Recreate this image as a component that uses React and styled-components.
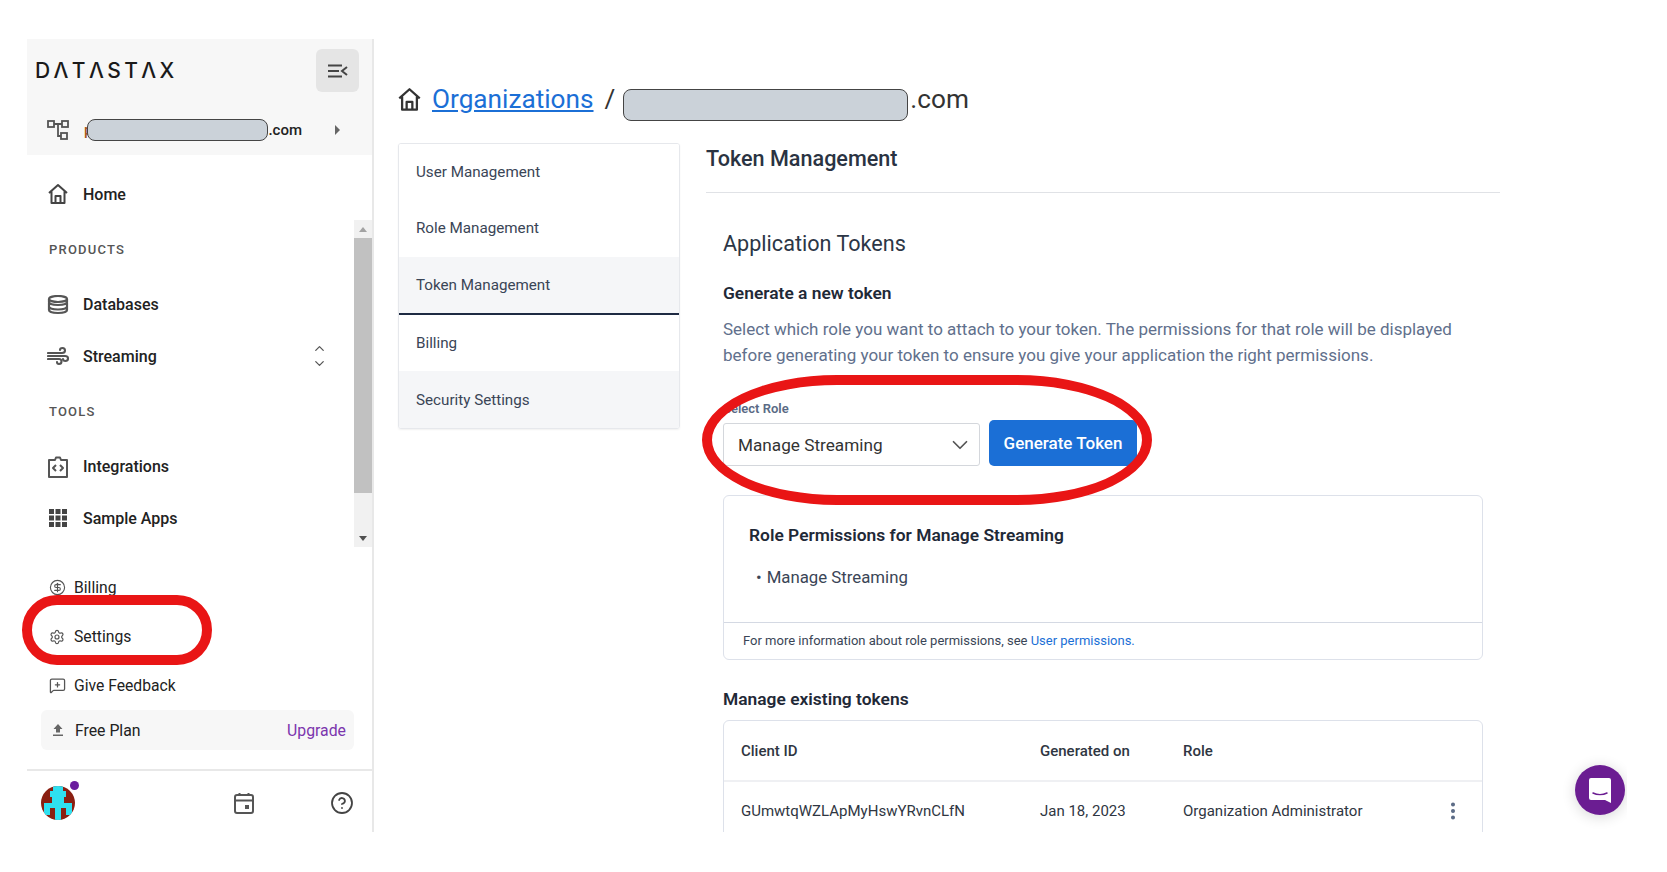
import React from "react";
import styled, { createGlobalStyle } from "styled-components";
import { ChevronDown, CircleDollarSign, CircleHelp, EllipsisVertical, Settings, MessageSquarePlus, ChevronUp } from "lucide-react";

const GlobalStyle = createGlobalStyle`
  html, body {
    margin: 0;
    background: #fff;
    font-family: Roboto, "Liberation Sans", sans-serif;
  }
  * {
    box-sizing: border-box;
  }
`;

const Page = styled.div`
  width: 1667px;
  height: 872px;
  padding: 39px 40px 40px 27px;
  overflow: hidden;
`;

const Frame = styled.div`
  position: relative;
  display: flex;
  width: 1600px;
  height: 793px;
`;

// sidebar
const Sidebar = styled.aside`
  flex: 0 0 347px;
  display: flex;
  flex-direction: column;
  border-right: 2px solid #e8e8e8;
`;

const SidebarTop = styled.div`
  height: 116px;
  background: #f7f7f7;
`;

const BrandRow = styled.div`
  display: flex;
  justify-content: space-between;
  align-items: center;
  height: 63px;
  padding: 10px 13px 10px 8px;
`;

const Logo = styled.span`
  font-family: Inter, sans-serif;
  font-size: 21px;
  font-weight: 500;
  letter-spacing: 3.4px;
  color: #1a1a1a;
`;

const ToggleButton = styled.button`
  display: flex;
  align-items: center;
  justify-content: center;
  width: 43px;
  height: 43px;
  padding: 0;
  border: 0;
  border-radius: 6px;
  background: #e5e5e5;
`;

const OrgRow = styled.div`
  display: flex;
  align-items: center;
  height: 53px;
  padding: 2px 32px 0 20px;
  font-size: 15px;
  font-weight: 500;
  color: #222;
`;

const OrgMask = styled.span`
  width: 181px;
  height: 22px;
  margin: 0 0 0 -5px;
  border: 1px solid #444;
  border-radius: 8px;
  background: #cbd2d9;
`;

const OrgInitial = styled.span`
  margin-left: 15px;
  color: #a5561c;
`;

const CaretRight = styled.span`
  width: 0;
  height: 0;
  margin-left: auto;
  border-left: 5px solid #666;
  border-top: 5px solid transparent;
  border-bottom: 5px solid transparent;
`;

const NavItem = styled.div`
  display: flex;
  align-items: center;
  gap: 14px;
  height: 51.5px;
  padding: 0 20px;
  font-size: 16px;
  font-weight: 500;
  color: #222;
`;

const HomeItem = styled(NavItem)`
  height: 65px;
  padding-top: 13px;
`;

const IconSlot = styled.span`
  display: flex;
  align-items: center;
  justify-content: center;
  flex: 0 0 22px;
  color: #555;
`;

const ExpandIcon = styled.span`
  display: flex;
  flex-direction: column;
  margin-left: auto;
  margin-right: 7px;
  color: #555;
`;

const ScrollArea = styled.div`
  display: flex;
  justify-content: space-between;
  height: 327px;
`;

const NavList = styled.div`
  flex: 1;
`;

const SectionLabel = styled.div`
  height: 59px;
  padding-left: 22px;
  font-size: 13px;
  font-weight: 500;
  line-height: 59px;
  letter-spacing: 1.2px;
  color: #555;
`;

const Scrollbar = styled.div`
  display: flex;
  flex-direction: column;
  flex: 0 0 18px;
  background: #f1f1f1;
`;

const ScrollArrow = styled.div`
  display: flex;
  align-items: center;
  justify-content: center;
  height: 18px;
  &::before {
    content: "";
    border-left: 4px solid transparent;
    border-right: 4px solid transparent;
    ${(p) => (p.$down ? "border-top: 5px solid #505050;" : "border-bottom: 5px solid #a3a3a3;")}
  }
`;

const ScrollThumb = styled.div`
  height: 255px;
  background: #c1c1c1;
`;

const ScrollRest = styled.div`
  flex: 1;
`;

const SmallNav = styled.div`
  margin-top: 16px;
`;

const SmallItem = styled.div`
  display: flex;
  align-items: center;
  gap: 8px;
  height: 49px;
  padding-left: 21px;
  font-size: 15.7px;
  color: #222;
`;

const SmallIcon = styled.span`
  display: flex;
  align-items: center;
  justify-content: center;
  flex: 0 0 18px;
  color: #555;
`;

const PlanBox = styled.div`
  display: flex;
  align-items: center;
  gap: 8px;
  height: 40px;
  margin: 0 18px 0 14px;
  padding: 0 8px;
  border-radius: 6px;
  background: #f7f7f7;
  font-size: 15.8px;
  color: #222;
`;

const Upgrade = styled.span`
  margin-left: auto;
  color: #7b35ad;
`;

const SidebarFooter = styled.div`
  display: flex;
  align-items: center;
  height: 63px;
  margin-top: 19px;
  padding: 3px 18px 0 14px;
  border-top: 2px solid #e8e8e8;
  color: #555;
`;

const AvatarWrap = styled.div`
  position: relative;
  width: 34px;
  height: 34px;
  margin-right: 159px;
`;

const AvatarDot = styled.span`
  position: absolute;
  top: -5px;
  right: -4px;
  width: 9px;
  height: 9px;
  border-radius: 50%;
  background: #6b1d9e;
`;

const HelpSlot = styled.span`
  display: flex;
  margin-left: auto;
  color: #444;
`;

// main column
const Main = styled.main`
  flex: 1;
  min-width: 0;
  padding: 40px 127px 0 24px;
  overflow: hidden;
`;

const Breadcrumb = styled.div`
  display: flex;
  align-items: center;
  height: 38px;
  margin-top: 1px;
  font-size: 26.2px;
  color: #333;
`;

const BreadcrumbHome = styled.span`
  display: flex;
  margin-left: -1px;
`;

const CrumbLink = styled.a`
  margin: 0 11px 0 10px;
  color: #1b6fd6;
  text-decoration: underline;
`;

const CrumbMask = styled.span`
  width: 285px;
  height: 32px;
  margin: 12px 2px 0 8px;
  border: 1px solid #444;
  border-radius: 8px;
  background: #cbd2d9;
`;

const Columns = styled.div`
  display: flex;
  gap: 26px;
  margin-top: 25px;
`;

const SideMenu = styled.div`
  align-self: flex-start;
  flex: 0 0 282px;
  border: 1px solid #e6e8ec;
  border-radius: 3px;
  box-shadow: 0 1px 2px rgba(0, 0, 0, 0.06);
  overflow: hidden;
`;

const MenuItem = styled.div`
  display: flex;
  align-items: center;
  height: ${(p) => (p.$active ? 58.5 : 56.3)}px;
  padding-left: 17px;
  font-size: 15.2px;
  color: #3a4556;
  background: ${(p) => (p.$shade ? "#f5f6f8" : "#fff")};
  border-bottom: ${(p) => (p.$active ? "2px solid #1e2a42" : "0")};
`;

const Content = styled.section`
  flex: 1;
`;

const PageTitle = styled.h1`
  height: 50px;
  margin: 0;
  font-size: 21.6px;
  font-weight: 500;
  line-height: 32px;
  color: #2a3342;
  border-bottom: 1px solid #e0e2e6;
`;

const Panel = styled.div`
  padding: 0 17px;
`;

const SubTitle = styled.h2`
  margin: 35px 0 0;
  font-size: 21.6px;
  font-weight: 400;
  line-height: 32px;
  color: #2c3646;
`;

const BlockTitle = styled.h3`
  margin: ${(p) => p.$top || 0}px 0 0;
  font-size: 17.4px;
  font-weight: 600;
  line-height: 24px;
  color: #1f2937;
`;

const Lead = styled.p`
  margin: 11px 0 0;
  font-size: 17px;
  line-height: 26px;
  color: #61708c;
`;

const FieldRow = styled.div`
  display: flex;
  align-items: flex-end;
  gap: 9px;
  margin-top: 33px;
`;

const Field = styled.label`
  display: flex;
  flex-direction: column;
  gap: 7px;
  font-size: 13px;
  font-weight: 600;
  color: #5a6a85;
`;

const SelectBox = styled.div`
  display: flex;
  align-items: center;
  justify-content: space-between;
  width: 257px;
  height: 43px;
  padding: 0 6px 0 14px;
  border: 1px solid #d4d7dc;
  border-radius: 3px;
  font-size: 17.2px;
  font-weight: 400;
  color: #333;
`;

const PrimaryButton = styled.button`
  width: 148px;
  height: 46px;
  border: 0;
  border-radius: 5px;
  background: #1b6fd6;
  font-family: inherit;
  font-size: 17px;
  font-weight: 500;
  color: #fff;
`;

const Card = styled.div`
  margin-top: ${(p) => p.$top || 0}px;
  border: 1px solid #dde1ea;
  border-radius: 6px;
`;

const CardBody = styled.div`
  height: 127px;
  padding: 27px 25px 0;
  border-bottom: 1px solid #d4d9e3;
`;

const BulletList = styled.ul`
  margin: 18px 0 0;
  padding: 0 0 0 7px;
  list-style: none;
  font-size: 16.8px;
  line-height: 24px;
  color: #3a4556;
  li::before {
    content: "•";
    margin-right: 5px;
  }
`;

const CardFoot = styled.div`
  height: 36px;
  padding-left: 19px;
  font-size: 13px;
  line-height: 35px;
  color: #3a4556;
  a {
    color: #1b6fd6;
  }
`;

const TableRow = styled.div`
  display: grid;
  grid-template-columns: 299px 143px 1fr 44px;
  align-items: center;
  height: ${(p) => p.$height}px;
  padding-left: 17px;
  font-size: 15px;
  font-weight: ${(p) => (p.$head ? 500 : 400)};
  color: #2f3642;
  border-bottom: ${(p) => (p.$head ? "2px solid #eff0f3" : "0")};
`;

const Kebab = styled.span`
  display: flex;
  margin-left: 4px;
  color: #5a6a85;
`;

// overlays
const Ellipse = styled.div`
  position: absolute;
  left: ${(p) => p.$x}px;
  top: ${(p) => p.$y}px;
  width: ${(p) => p.$w}px;
  height: ${(p) => p.$h}px;
  border: 10px solid #e91515;
  border-radius: ${(p) => p.$r};
`;

// the bubble's shadow stops at the edge of the screenshot
const ChatClip = styled.div`
  position: absolute;
  inset: 0;
  overflow: hidden;
  pointer-events: none;
`;

const ChatBubble = styled.div`
  position: absolute;
  left: 1548px;
  top: 726px;
  display: flex;
  align-items: center;
  justify-content: center;
  width: 50px;
  height: 50px;
  border-radius: 50%;
  background: #6b1d92;
  box-shadow: 0 2px 14px rgba(0, 0, 0, 0.16);
`;

const OrgIcon = () => (
  <svg width="22" height="22" viewBox="0 0 22 22" fill="none" stroke="#555" strokeWidth="1.8">
    <rect x="1" y="2" width="6" height="6" />
    <rect x="15" y="2" width="6" height="6" />
    <rect x="14" y="14" width="6" height="6" />
    <path d="M7 5h8M11 5v12h3" />
  </svg>
);

const HomeIcon = ({ size = 22, color = "#444" }) => (
  <svg width={size} height={size} viewBox="0 0 22 22" fill="none" stroke={color} strokeWidth="2" strokeLinejoin="round">
    <path d="M2 10 11 2l9 8M4.5 8.5V20h13V8.5" />
    <path d="M8.5 20v-7h5v7" />
  </svg>
);

const DatabaseIcon = () => (
  <svg width="22" height="20" viewBox="0 0 22 20" fill="none" stroke="#555" strokeWidth="2.2">
    <ellipse cx="11" cy="4" rx="9" ry="3" />
    <path d="M2 4v3c0 1.800 4 3 9 3s9-1.200 9-3V4M2 7.500v4c0 1.800 4 3 9 3s9-1.200 9-3v-4M2 11.500V15c0 1.800 4 3 9 3s9-1.200 9-3v-3.500" />
  </svg>
);

const StreamIcon = () => (
  <svg width="22" height="20" viewBox="0 0 22 20" fill="none" stroke="#555" strokeWidth="2.1" strokeLinecap="round">
    <path d="M1 7h14c2.500 0 3-1.500 3-2.500C18 3 17 2 15.500 2S13 3 13 4" />
    <path d="M1 10h17c2 0 3 1 3 2.500S20 15 18.500 15 16 14 16 13" />
    <path d="M1 13h11c1.500 0 2.500 1 2.500 2.500S13.500 18 12 18s-2-1-2-2" />
  </svg>
);

const IntegrationIcon = () => (
  <svg width="20" height="22" viewBox="0 0 20 22" fill="none" stroke="#555" strokeWidth="2" strokeLinejoin="round">
    <path d="M1 4h6l1-2.500h4L13 4h6v17H1z" />
    <path d="M8 9l-3 3 3 3M12 9l3 3-3 3" />
  </svg>
);

const GridIcon = () => (
  <svg width="18" height="18" viewBox="0 0 18 18" fill="#444">
    {[0, 6.5, 13].map((y) =>
      [0, 6.5, 13].map((x) => <rect key={`${x}-${y}`} x={x} y={y} width="5" height="5" />)
    )}
  </svg>
);

const UploadIcon = () => (
  <svg width="14" height="14" viewBox="0 0 14 14" fill="#666">
    <path d="M7 1 2.500 6H5v3.500h4V6h2.500z" />
    <rect x="2" y="11.500" width="10" height="1.500" />
  </svg>
);

const CalendarIcon = () => (
  <svg width="20" height="22" viewBox="0 0 20 22" fill="none" stroke="#555" strokeWidth="2">
    <rect x="1" y="3" width="18" height="18" rx="2" />
    <path d="M1 8.500h18M5.500 1v3M14.500 1v3" />
    <rect x="11" y="13" width="4" height="4" fill="#555" stroke="none" />
  </svg>
);

const ToggleIcon = () => (
  <svg width="20" height="14" viewBox="0 0 20 14" fill="none" stroke="#444" strokeWidth="2">
    <path d="M0 1.500h14M0 7h11M0 12.500h14M19 3l-5 4 5 4" />
  </svg>
);

// identicon, clipped to the circle
const Avatar = () => (
  <svg width="34" height="34" viewBox="0 0 34 34">
    <clipPath id="avatar-clip">
      <circle cx="17" cy="17" r="17" />
    </clipPath>
    <g clipPath="url(#avatar-clip)">
      <rect width="34" height="34" fill="#8a1f11" />
      <path
        fill="#2fe0f0"
        d="M12 0h10v5h3v6h-2v6h8v12h-6v-7h-5v12h-6V22H9v7H3V17h8v-6H9V5h3z"
      />
    </g>
  </svg>
);

const ChatIcon = () => (
  <svg width="24" height="28" viewBox="0 0 24 28">
    <path fill="#fff" d="M3 2h18a2 2 0 0 1 2 2v23l-6-3H3a2 2 0 0 1-2-2V4a2 2 0 0 1 2-2z" />
    <path fill="none" stroke="#6b1d92" strokeWidth="1.500" strokeLinecap="round" d="M5 17c4 2 10 2 14 0" />
  </svg>
);

const App = () => {
  return (
    <Page>
      <GlobalStyle />
      <Frame>
        <Sidebar>
          <SidebarTop>
            <BrandRow>
              <Logo>DΛTΛSTΛX</Logo>
              <ToggleButton>
                <ToggleIcon />
              </ToggleButton>
            </BrandRow>
            <OrgRow>
              <OrgIcon />
              <OrgInitial>p</OrgInitial>
              <OrgMask />
              .com
              <CaretRight />
            </OrgRow>
          </SidebarTop>

          <HomeItem>
            <IconSlot>
              <HomeIcon />
            </IconSlot>
            Home
          </HomeItem>

          <ScrollArea>
            <NavList>
              <SectionLabel>PRODUCTS</SectionLabel>
              <NavItem>
                <IconSlot>
                  <DatabaseIcon />
                </IconSlot>
                Databases
              </NavItem>
              <NavItem>
                <IconSlot>
                  <StreamIcon />
                </IconSlot>
                Streaming
                <ExpandIcon>
                  <ChevronUp size={15} />
                  <ChevronDown size={15} />
                </ExpandIcon>
              </NavItem>
              <SectionLabel>TOOLS</SectionLabel>
              <NavItem>
                <IconSlot>
                  <IntegrationIcon />
                </IconSlot>
                Integrations
              </NavItem>
              <NavItem>
                <IconSlot>
                  <GridIcon />
                </IconSlot>
                Sample Apps
              </NavItem>
            </NavList>
            <Scrollbar>
              <ScrollArrow />
              <ScrollThumb />
              <ScrollRest />
              <ScrollArrow $down />
            </Scrollbar>
          </ScrollArea>

          <SmallNav>
            <SmallItem>
              <SmallIcon>
                <CircleDollarSign size={17} strokeWidth={1.6} />
              </SmallIcon>
              Billing
            </SmallItem>
            <SmallItem>
              <SmallIcon>
                <Settings size={16} strokeWidth={1.8} />
              </SmallIcon>
              Settings
            </SmallItem>
            <SmallItem>
              <SmallIcon>
                <MessageSquarePlus size={17} strokeWidth={1.8} />
              </SmallIcon>
              Give Feedback
            </SmallItem>
          </SmallNav>
          <PlanBox>
            <SmallIcon>
              <UploadIcon />
            </SmallIcon>
            Free Plan
            <Upgrade>Upgrade</Upgrade>
          </PlanBox>

          <SidebarFooter>
            <AvatarWrap>
              <Avatar />
              <AvatarDot />
            </AvatarWrap>
            <CalendarIcon />
            <HelpSlot>
              <CircleHelp size={24} strokeWidth={1.8} />
            </HelpSlot>
          </SidebarFooter>
        </Sidebar>

        <Main>
          <Breadcrumb>
            <BreadcrumbHome>
              <HomeIcon size={25} color="#333" />
            </BreadcrumbHome>
            <CrumbLink>Organizations</CrumbLink>/<CrumbMask />
            .com
          </Breadcrumb>

          <Columns>
            <SideMenu>
              <MenuItem>User Management</MenuItem>
              <MenuItem>Role Management</MenuItem>
              <MenuItem $shade $active>
                Token Management
              </MenuItem>
              <MenuItem>Billing</MenuItem>
              <MenuItem $shade>Security Settings</MenuItem>
            </SideMenu>

            <Content>
              <PageTitle>Token Management</PageTitle>
              <Panel>
                <SubTitle>Application Tokens</SubTitle>
                <BlockTitle $top={21}>Generate a new token</BlockTitle>
                <Lead>
                  Select which role you want to attach to your token. The permissions for that role will be displayed
                  before generating your token to ensure you give your application the right permissions.
                </Lead>
                <FieldRow>
                  <Field>
                    Select Role
                    <SelectBox>
                      Manage Streaming
                      <ChevronDown size={26} color="#555" strokeWidth={1.6} />
                    </SelectBox>
                  </Field>
                  <PrimaryButton>Generate Token</PrimaryButton>
                </FieldRow>

                <Card $top={29}>
                  <CardBody>
                    <BlockTitle>Role Permissions for Manage Streaming</BlockTitle>
                    <BulletList>
                      <li>Manage Streaming</li>
                    </BulletList>
                  </CardBody>
                  <CardFoot>
                    For more information about role permissions, see <a>User permissions.</a>
                  </CardFoot>
                </Card>

                <BlockTitle $top={27}>Manage existing tokens</BlockTitle>
                <Card $top={9}>
                  <TableRow $head $height={61}>
                    <span>Client ID</span>
                    <span>Generated on</span>
                    <span>Role</span>
                  </TableRow>
                  <TableRow $height={58}>
                    <span>GUmwtqWZLApMyHswYRvnCLfN</span>
                    <span>Jan 18, 2023</span>
                    <span>Organization Administrator</span>
                    <Kebab>
                      <EllipsisVertical size={22} strokeWidth={2.4} />
                    </Kebab>
                  </TableRow>
                </Card>
              </Panel>
            </Content>
          </Columns>
        </Main>

        <Ellipse $x={-5} $y={556} $w={190} $h={70} $r="35px" />
        <Ellipse $x={675} $y={336} $w={450} $h={130} $r="135px / 65px" />
        <ChatClip>
          <ChatBubble>
            <ChatIcon />
          </ChatBubble>
        </ChatClip>
      </Frame>
    </Page>
  );
};

export default App;
